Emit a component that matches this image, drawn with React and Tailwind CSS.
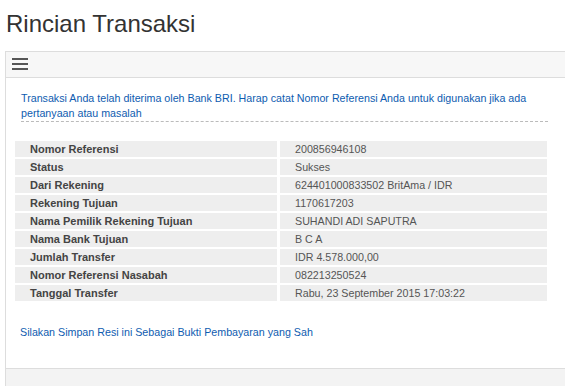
import React from 'react';

const rows = [
  ['Nomor Referensi', '200856946108'],
  ['Status', 'Sukses'],
  ['Dari Rekening', '624401000833502 BritAma / IDR'],
  ['Rekening Tujuan', '1170617203'],
  ['Nama Pemilik Rekening Tujuan', 'SUHANDI ADI SAPUTRA'],
  ['Nama Bank Tujuan', 'B C A'],
  ['Jumlah Transfer', 'IDR 4.578.000,00'],
  ['Nomor Referensi Nasabah', '082213250524'],
  ['Tanggal Transfer', 'Rabu, 23 September 2015 17:03:22'],
];

const App = () => {
  return (
    <div className="w-[565px] h-[386px] overflow-hidden bg-white font-['Liberation_Sans',Arial,sans-serif]">
      <h1 className="pt-[10px] pl-[6px] mb-[13px] text-[24px] leading-[28px] text-[#333]">
        Rincian Transaksi
      </h1>

      <div className="ml-[5px] w-[600px] border-l border-t border-[#ddd]">
        {/* toolbar */}
        <div className="h-[26px] bg-[#f7f7f7] border-b border-[#ddd] pl-[6px] pt-[6px]">
          <div className="flex flex-col gap-[3px] w-[16px]">
            <span className="block h-[2px] bg-[#555]" />
            <span className="block h-[2px] bg-[#555]" />
            <span className="block h-[2px] bg-[#555]" />
          </div>
        </div>

        <div className="pl-[9px] pb-[28px]">
          <div className="w-[533px]">
            <p className="ml-[6px] pt-[13px] text-[10.7px] leading-[15px] text-[#0e5cb0] border-b border-dashed border-[#bbb]">
              Transaksi Anda telah diterima oleh Bank BRI. Harap catat Nomor Referensi Anda untuk digunakan jika ada pertanyaan atau masalah
            </p>

            <div className="mt-[19px] w-[532px] flex flex-col gap-[2px]">
              {rows.map(([label, value]) => (
                <div key={label} className="flex gap-[3px] h-[16px]">
                  <div className="w-[262px] bg-[#eee] pl-[15px] flex items-center text-[11px] font-bold text-[#444]">
                    {label}
                  </div>
                  <div className="flex-1 bg-[#eee] pl-[15px] flex items-center text-[10.7px] text-[#555]">
                    {value}
                  </div>
                </div>
              ))}
            </div>

            <p className="mt-[24px] ml-[5px] text-[10.7px] leading-[15px] text-[#0e5cb0]">
              Silakan Simpan Resi ini Sebagai Bukti Pembayaran yang Sah
            </p>
          </div>
        </div>

        <div className="h-[40px] bg-[#f3f3f3] border-t border-[#ddd]" />
      </div>
    </div>
  );
};

export default App;
